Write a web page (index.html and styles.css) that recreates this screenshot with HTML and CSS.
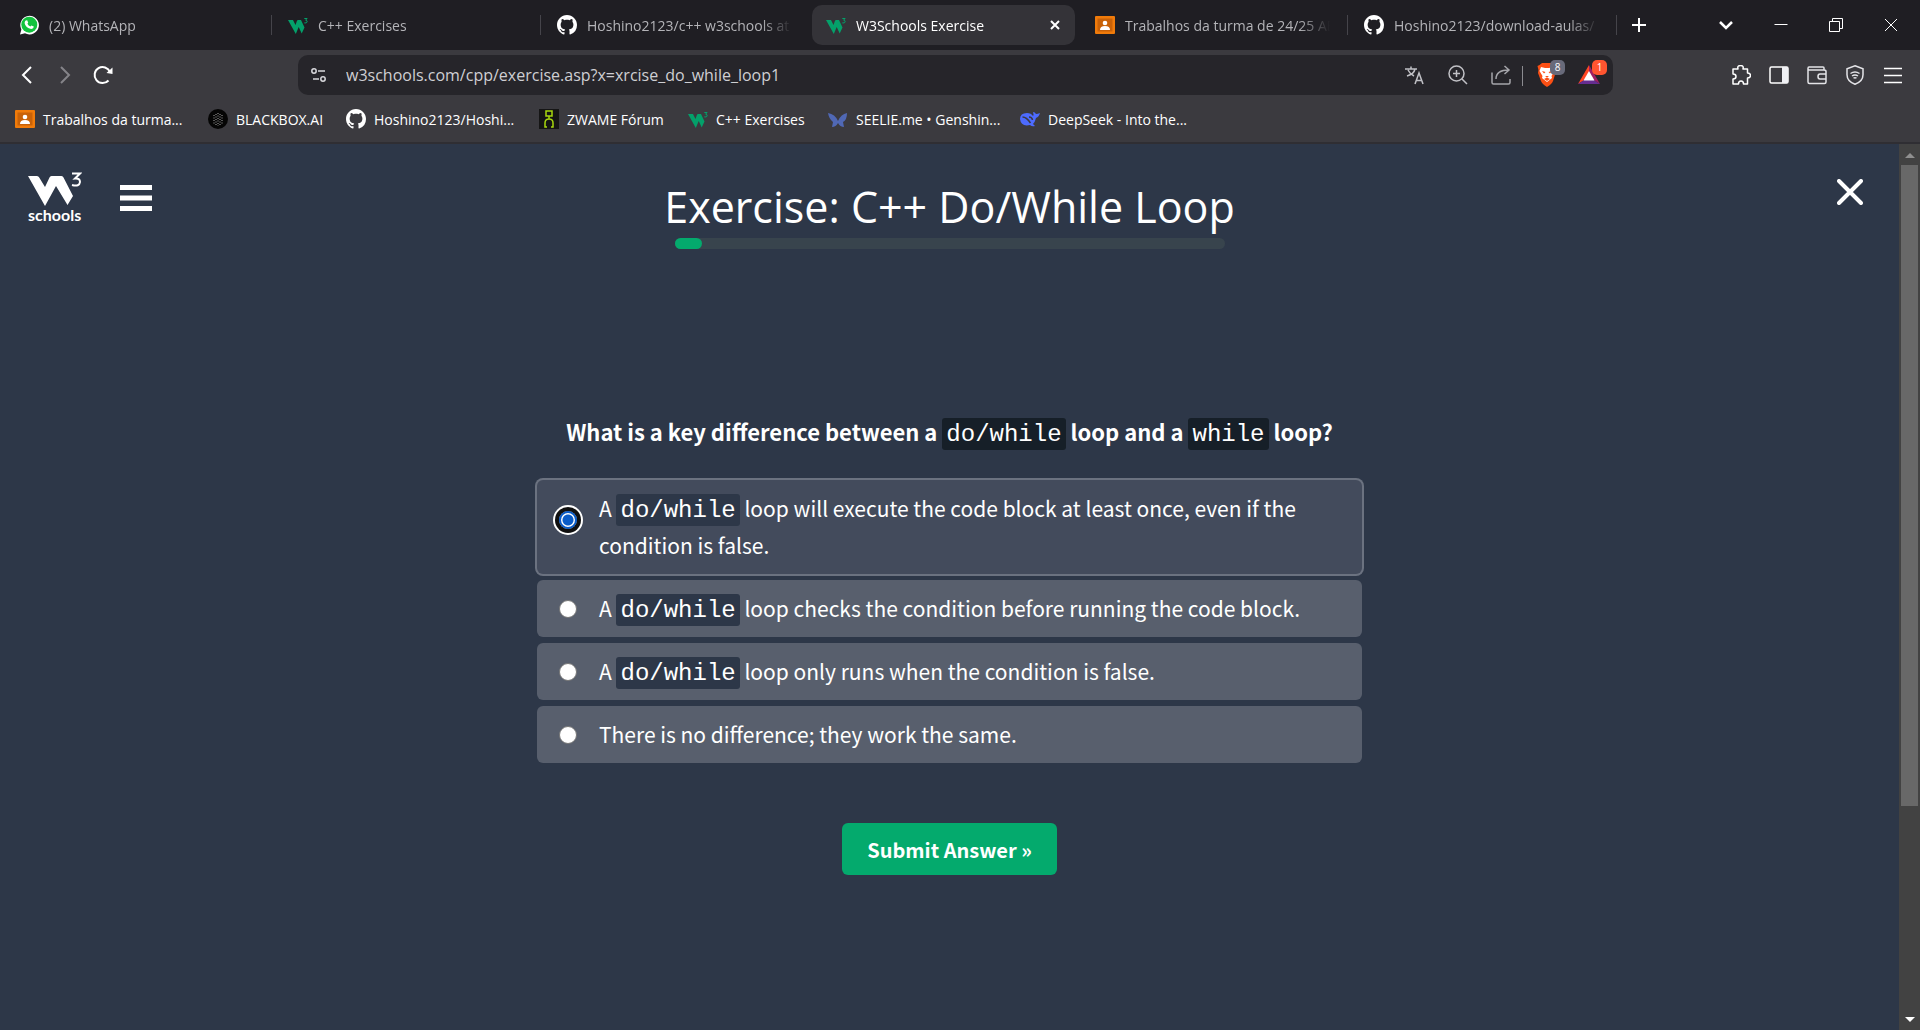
FILE: index.html
```html
<!DOCTYPE html>
<html lang="en">
<head>
<meta charset="utf-8">
<title>W3Schools Exercise</title>
<link rel="stylesheet" href="styles.css">
</head>
<body>
<svg class="defs" aria-hidden="true">
  <symbol id="w3" viewBox="0 0 20 20"><path d="M0 5h5l2.500 5L9 5.700Q9.400 5 10 5h3l3.500 7.500-2.800 6-3-6.500-2.900 7z" fill="#04a06a"/><path d="M16.300 3.500h2.800l-1.500 1.700q1.800.2 1.600 1.700-.4 1.500-2.900 1" fill="none" stroke="#04a06a"/></symbol>
  <symbol id="github" viewBox="0 0 16 16"><path fill="#fff" d="M8 0C3.580 0 0 3.580 0 8c0 3.540 2.290 6.530 5.470 7.590.4.070.55-.17.55-.38 0-.19-.01-.82-.01-1.490-2.010.37-2.530-.49-2.690-.94-.09-.23-.48-.94-.82-1.130-.28-.15-.68-.52-.01-.53.63-.01 1.080.58 1.230.82.72 1.210 1.870.87 2.330.66.070-.52.28-.87.51-1.070-1.780-.2-3.640-.89-3.640-3.950 0-.87.31-1.590.82-2.150-.08-.2-.36-1.020.08-2.120 0 0 .67-.21 2.200.82.640-.18 1.320-.27 2-.27s1.360.09 2 .27c1.530-1.040 2.200-.82 2.200-.82.44 1.100.16 1.920.08 2.120.51.560.82 1.270.82 2.150 0 3.070-1.870 3.750-3.650 3.950.29.250.54.730.54 1.480 0 1.070-.01 1.930-.01 2.200 0 .21.15.46.55.38A8 8 0 0 0 16 8c0-4.420-3.580-8-8-8z"/></symbol>
  <symbol id="classroom" viewBox="0 0 20 20"><rect y="1" width="20" height="18" rx="1" fill="#f07b0a"/><rect x="2.500" y="3.500" width="15" height="13" fill="#c96208"/><circle cx="10" cy="8" r="2.300" fill="#fff"/><path d="M5 15q0-4 5-4t5 4z" fill="#fff"/></symbol>
</svg>

<div class="browser">
  <header class="chrome">
    <div class="tabstrip">
      <nav class="tabs" aria-label="Tabs">
        <a class="tab" href="#"><svg class="fav" viewBox="0 0 20 20"><path d="M1 19.500l1.400-5A9.300 9.300 0 1 1 6 18.200z" fill="#fff"/><circle cx="10.300" cy="9.700" r="8" fill="#12c33e"/><path d="M6.700 5.500l1.500-.2 1 2.400-.8 1.100q1 2 3 2.800l1-1.200 2.400 1.200q0 2.300-2.500 2.400Q6.500 13 5.600 8q.1-1.700 1.100-2.500z" fill="#fff"/></svg><span class="tab-title">(2) WhatsApp</span></a>
        <a class="tab" href="#"><svg class="fav"><use href="#w3"/></svg><span class="tab-title">C++ Exercises</span></a>
        <a class="tab tab-before" href="#"><svg class="fav"><use href="#github"/></svg><span class="tab-title">Hoshino2123/c++ w3schools at</span></a>
        <div class="tab tab-active"><svg class="fav"><use href="#w3"/></svg><span class="tab-title">W3Schools Exercise</span><button class="icon-btn tab-close" aria-label="Close tab"><svg width="12" height="12" viewBox="0 0 12 12"><path d="M2 2l8 8M10 2l-8 8" stroke="#fff" stroke-width="2"/></svg></button></div>
        <a class="tab" href="#"><svg class="fav"><use href="#classroom"/></svg><span class="tab-title">Trabalhos da turma de 24/25 AE</span></a>
        <a class="tab" href="#"><svg class="fav"><use href="#github"/></svg><span class="tab-title">Hoshino2123/download-aulas/</span></a>
      </nav>
      <button class="icon-btn new-tab" aria-label="New tab"><svg width="16" height="16" viewBox="0 0 16 16"><path d="M8 1v14M1 8h14" stroke="#fff" stroke-width="2"/></svg></button>
      <div class="window-controls">
        <button class="icon-btn" aria-label="Search tabs"><svg width="16" height="16" viewBox="0 0 16 16"><path d="M2 5l6 6 6-6" fill="none" stroke="#fff" stroke-width="2.500"/></svg></button>
        <button class="icon-btn" aria-label="Minimize"><svg width="16" height="16" viewBox="0 0 16 16"><path d="M1.500 7.500h13" stroke="#fff"/></svg></button>
        <button class="icon-btn" aria-label="Restore"><svg width="16" height="16" viewBox="0 0 16 16"><path d="M1.500 4.500h10v10h-10zM4.500 4.500v-3h10v10h-3" fill="none" stroke="#fff"/></svg></button>
        <button class="icon-btn" aria-label="Close"><svg width="16" height="16" viewBox="0 0 16 16"><path d="M2 2l12 12M14 2L2 14" stroke="#fff"/></svg></button>
      </div>
    </div>

    <div class="toolbar">
      <div class="nav-buttons">
        <button class="icon-btn" aria-label="Back"><svg width="20" height="20" viewBox="0 0 20 20"><path d="M14 2l-8 8 8 8" fill="none" stroke="#fff" stroke-width="2"/></svg></button>
        <button class="icon-btn" aria-label="Forward"><svg width="20" height="20" viewBox="0 0 20 20"><path d="M6 2l8 8-8 8" fill="none" stroke="#858489" stroke-width="2"/></svg></button>
        <button class="icon-btn" aria-label="Reload"><svg width="20" height="20" viewBox="0 0 20 20"><path d="M17 7a8 8 0 1 0-1.500 8.500" fill="none" stroke="#fff" stroke-width="2"/><path d="M19.500 2.500V9l-6-1z" fill="#fff"/></svg></button>
      </div>
      <div class="address">
        <svg class="site-info" viewBox="0 0 16 16"><g fill="none" stroke="#d8d8dc" stroke-width="1.500"><circle cx="3" cy="4" r="2.200"/><path d="M7 4h7M2 12h6"/><circle cx="12" cy="12" r="2.200"/></g></svg>
        <input class="url" type="text" aria-label="Address" value="w3schools.com/cpp/exercise.asp?x=xrcise_do_while_loop1">
        <button class="icon-btn addr-btn" aria-label="Translate"><svg width="20" height="20" viewBox="0 0 20 20"><g fill="none" stroke="#c0c0c5" stroke-width="1.500"><path d="M0 4h12M6 1.500V4M2 11q7-2 8-7M3 5q2 4 6 6M10 19l4-11 4 11M11.500 15.500h5"/></g></svg></button>
        <button class="icon-btn addr-btn" aria-label="Zoom"><svg width="20" height="20" viewBox="0 0 20 20"><g fill="none" stroke="#c0c0c5" stroke-width="1.500"><circle cx="8.500" cy="8.500" r="7.500"/><path d="M14 14l5 5M8.500 5v7M5 8.500h7"/></g></svg></button>
        <button class="icon-btn addr-btn" aria-label="Share"><svg width="20" height="20" viewBox="0 0 20 20"><path d="M1 7.500v10q0 1.500 1.500 1.500h15q1.500 0 1.500-1.500V14M5 14q0-9 13-9M13.500 1L18 5l-4.500 4" fill="none" stroke="#a5a5aa" stroke-width="1.500"/></svg></button>
        <span class="addr-divider"></span>
        <button class="icon-btn shield-btn" aria-label="Brave Shields"><svg width="20" height="24" viewBox="0 0 20 24"><path d="M5 0h10l2 2 2 1-1 4 .5 3L16 18q-1 3-6 6-5-3-6-6L1 10l.5-3-1-4 2-1z" fill="#fb4f14"/><path d="M4 4l4 1h4l4-1 1.500 4-3 5 .5 2-5 4-5-4 .5-2-3-5z" fill="#fff"/><path d="M5 8l3.500 1L7 10.500zM15 8l-3.500 1 1.500 1.500zM8 13h4l-2 1.500zM7 16l3-1.500 3 1.500-3 2z" fill="#fb4f14"/></svg><span class="badge badge-gray">8</span></button>
        <button class="icon-btn shield-btn" aria-label="Rewards"><svg width="22" height="24" viewBox="0 0 22 24"><path d="M11 2L0 21l11-7z" fill="#ff4724"/><path d="M11 2l11 19-11-7z" fill="#9e1f63"/><path d="M0 21h22l-11-7z" fill="#662d91"/><path d="M11 8l-5.500 9.500h11z" fill="#fff"/></svg><span class="badge badge-red">1</span></button>
      </div>
      <div class="toolbar-actions">
        <button class="icon-btn" aria-label="Extensions"><svg width="20" height="20" viewBox="0 0 20 20"><path d="M2 4h5q-1-3.500 2.500-3.500T12 4h4.500v4q3 0 3 2.500t-3 2.500v6h-4q0-3-2.500-3t-2.500 3H2v-5q3 0 3-2.500T2 9z" fill="none" stroke="#fff" stroke-width="1.500" stroke-linejoin="round"/></svg></button>
        <button class="icon-btn" aria-label="Side panel"><svg width="20" height="20" viewBox="0 0 20 20"><rect x="1" y="2" width="18" height="16" rx="1.500" fill="none" stroke="#fff" stroke-width="1.500"/><path d="M13 2h6v16h-6z" fill="#f0f1f5"/></svg></button>
        <button class="icon-btn" aria-label="Wallet"><svg width="20" height="20" viewBox="0 0 20 20"><path d="M17 5V3q0-1-1-1H2q-1 0-1 1.500T2 5h15q2 0 2 1.500V17q0 1.500-1.500 1.500h-15Q1 18.500 1 17V3M19 9h-6q-2 0-2 2.500t2 2.500h6" fill="none" stroke="#e4e4e8" stroke-width="1.500"/></svg></button>
        <button class="icon-btn" aria-label="VPN"><svg width="20" height="20" viewBox="0 0 20 20"><path d="M10 .8l8 3v6q0 6.500-8 9.500-8-3-8-9.500v-6zM5.500 8.500q4.500-3 9 0M7 11q3-2 6 0M8.500 13.200q1.500-1 3 0" fill="none" stroke="#e4e4e8" stroke-width="1.500"/></svg></button>
        <button class="icon-btn" aria-label="Menu"><svg width="20" height="20" viewBox="0 0 20 20"><path d="M1 3.500h18M1 10.500h18M1 17.500h18" stroke="#fff" stroke-width="1.500"/></svg></button>
      </div>
    </div>

    <nav class="bookmarks" aria-label="Bookmarks">
      <a class="bookmark" href="#"><svg class="fav"><use href="#classroom"/></svg>Trabalhos da turma...</a>
      <a class="bookmark" href="#"><svg class="fav" viewBox="0 0 20 20"><circle cx="10" cy="10" r="10" fill="#050505"/><path d="M10 4v13M6 6v9M14 6v9M8 5v11M12 5v11" stroke="#aaa" stroke-dasharray="1 1.500"/></svg>BLACKBOX.AI</a>
      <a class="bookmark" href="#"><svg class="fav"><use href="#github"/></svg>Hoshino2123/Hoshi...</a>
      <a class="bookmark" href="#"><svg class="fav" viewBox="0 0 20 20"><path d="M0 0h20v20H0z" fill="#151515"/><path d="M7 2h6v5H7zM8 18H6v-4q0-4 4-4t4 4v4h-2M10 7v3" fill="none" stroke="#a8d80e" stroke-width="1.500"/></svg>ZWAME Fórum</a>
      <a class="bookmark" href="#"><svg class="fav"><use href="#w3"/></svg>C++ Exercises</a>
      <a class="bookmark" href="#"><svg class="fav" viewBox="0 0 20 20"><path d="M0 4q7 1 10 8 3-7 9-8 0 7-4 9l1 5q-4 0-6-4-2 4-6 4l1-5Q1 10 0 4z" fill="#5068b5"/></svg>SEELIE.me • Genshin...</a>
      <a class="bookmark" href="#"><svg class="fav" viewBox="0 0 20 20"><path d="M0 10q0-6 7-6 4 0 6 3 1-1 0-4 2 0 3 2 2 0 4-1-1 4-4 5-1 4-3 6l2 2q-3 1-5-1-9 2-10-6z" fill="#4d6bfe"/><path d="M2.500 8q4 0 8 6M9 8q3 0 3.500 3" fill="none" stroke="#3b3a3f" stroke-width="1.500"/></svg>DeepSeek - Into the...</a>
    </nav>
  </header>

  <div class="viewport">
    <main class="page">
      <header class="page-header">
        <div class="brand">
          <a class="logo" href="#" aria-label="W3Schools">
            <svg width="54" height="35" viewBox="0 0 54 35"><path d="M0 4h9q1.500 0 2.200 1.500L17 15l4.500-9.500Q22 4 23.500 4h10q1.500 0 2 1.500L45 24l-5.500 9L28 14 17 34z" fill="#fff"/><path d="M44 1.500h8l-5 5q5-.5 5 3.500-.5 5-8 3" fill="none" stroke="#fff" stroke-width="2"/></svg>
            <span class="logo-text">schools</span>
          </a>
          <button class="icon-btn" aria-label="Open menu"><svg width="32" height="26" viewBox="0 0 32 26"><path d="M0 2.500h32M0 13h32M0 23.500h32" stroke="#fff" stroke-width="5"/></svg></button>
        </div>
        <div class="heading">
          <h1 class="title">Exercise: C++ Do/While Loop</h1>
          <div class="progress"><div class="progress-fill" style="width:5%"></div></div>
        </div>
        <button class="icon-btn close-exercise" aria-label="Close exercise"><svg width="26" height="26" viewBox="0 0 26 26"><path d="M2 2l22 22M24 2L2 24" stroke="#fff" stroke-width="4" stroke-linecap="round"/></svg></button>
      </header>

      <form class="quiz">
        <h2 class="question">What is a key difference between a <code class="code code-dark">do/while</code> loop and a <code class="code code-dark">while</code> loop?</h2>
        <div class="options">
          <label class="option option-selected"><input class="radio" type="radio" name="answer" checked><span>A <code class="code">do/while</code> loop will execute the code block at least once, even if the condition is false.</span></label>
          <label class="option"><input class="radio" type="radio" name="answer"><span>A <code class="code">do/while</code> loop checks the condition before running the code block.</span></label>
          <label class="option"><input class="radio" type="radio" name="answer"><span>A <code class="code">do/while</code> loop only runs when the condition is false.</span></label>
          <label class="option"><input class="radio" type="radio" name="answer"><span>There is no difference; they work the same.</span></label>
        </div>
        <button class="submit" type="button">Submit Answer »</button>
      </form>
    </main>
    <div class="scrollbar" aria-hidden="true">
      <svg width="10" height="21" viewBox="0 0 10 21"><path d="M0 14l5-5 5 5z" fill="#8f8f8f"/></svg>
      <div class="track"><div class="thumb"></div></div>
      <svg width="10" height="21" viewBox="0 0 10 21"><path d="M0 8l5 5 5-5z" fill="#fff"/></svg>
    </div>
  </div>
</div>
</body>
</html>
```
FILE: styles.css
```css
* {
  box-sizing: border-box;
}

body {
  margin: 0;
  color: #fff;
  background: #2d3748;
  font-family: "Open Sans", "Noto Sans", sans-serif;
}

a {
  color: inherit;
  text-decoration: none;
}

.defs {
  display: none;
}

.browser {
  display: flex;
  flex-direction: column;
  min-height: 100vh;
}

.icon-btn {
  display: flex;
  align-items: center;
  justify-content: center;
  padding: 0;
  border: 0;
  background: none;
  color: inherit;
}

/* Browser chrome */
.chrome {
  background: #3b3a3f;
  border-bottom: 2px solid #2f2e33;
  font-size: 14px;
  font-weight: 400;
}

.tabstrip {
  display: flex;
  align-items: center;
  height: 50px;
  padding: 0 21px 0 5px;
  background: #1f1e23;
}

.tabs {
  display: flex;
  flex: 0 1 1608px;
  gap: 6px;
  min-width: 0;
}

.tab {
  position: relative;
  display: flex;
  flex: 1 1 0;
  align-items: center;
  gap: 10px;
  min-width: 0;
  height: 40px;
  padding: 0 14px;
  color: #b4b4b8;
}

.tab::after {
  content: "";
  position: absolute;
  top: 10px;
  right: -4px;
  width: 1px;
  height: 20px;
  background: #45444a;
}

.tab-before::after,
.tab-active::after {
  display: none;
}

.tab-active {
  border-radius: 10px;
  background: #343338;
  color: #fff;
}

.tab-title {
  flex: 1;
  overflow: hidden;
  white-space: nowrap;
  mask-image: linear-gradient(to right, #000 85%, transparent);
}

.fav {
  flex: none;
  width: 20px;
  height: 20px;
}

.new-tab {
  margin-left: 18px;
}

.window-controls {
  display: flex;
  justify-content: space-between;
  width: 181px;
  margin-left: auto;
}

.toolbar {
  display: flex;
  align-items: center;
  padding: 5px 17px;
}

.nav-buttons {
  display: flex;
  gap: 18px;
  width: 281px;
}

.address {
  display: flex;
  flex: 1;
  align-items: center;
  gap: 23px;
  height: 40px;
  padding: 0 13px;
  border-radius: 10px;
  background: #26252a;
}

.site-info {
  width: 16px;
  height: 18px;
  margin-right: -4px;
}

.url {
  flex: 1;
  min-width: 0;
  padding: 0;
  border: 0;
  outline: 0;
  background: none;
  color: #cfcfd3;
  font: 400 16px "Open Sans", "Noto Sans", sans-serif;
}

.addr-divider {
  width: 1px;
  height: 20px;
  margin: 0 -10px -1px -12px;
  background: #8b8b90;
}

.shield-btn {
  position: relative;
  width: 22px;
  margin-right: -3px;
}

.shield-btn:last-child {
  margin-right: 0;
}

.badge {
  position: absolute;
  top: -3px;
  left: 14px;
  width: 15px;
  height: 15px;
  border-radius: 5px;
  font: 10px/15px "Open Sans", sans-serif;
}

.badge-gray {
  background: #686a7a;
}

.badge-red {
  background: #ff5530;
}

.toolbar-actions {
  display: flex;
  justify-content: flex-end;
  gap: 18px;
  width: 290px;
}

.bookmarks {
  display: grid;
  grid-template-columns: 193px 138px 193px 149px 140px 192px 180px;
  align-items: center;
  height: 42px;
  padding: 0 15px 4px;
}

.bookmark {
  display: flex;
  align-items: center;
  gap: 8px;
  white-space: nowrap;
}

/* Exercise page */
.viewport {
  display: flex;
  flex: 1;
}

.page {
  flex: 1;
}

.page-header {
  display: grid;
  grid-template-columns: 1fr auto 1fr;
  padding: 28px 28px 0;
}

.brand {
  display: flex;
  align-items: center;
  align-self: start;
  gap: 38px;
}

.logo {
  display: flex;
  flex-direction: column;
}

.logo-text {
  font: bold 16px/16px Lato, sans-serif;
}

.heading {
  display: flex;
  flex-direction: column;
  align-items: center;
}

.title {
  margin: 0;
  padding: 6px 0 2px;
  font-size: 43px;
  font-weight: 400;
  line-height: 58px;
}

.progress {
  width: 550px;
  height: 11px;
  border-radius: 6px;
  background: #38444d;
}

.progress-fill {
  height: 100%;
  border-radius: 6px;
  background: #04aa6d;
}

.close-exercise {
  align-self: start;
  justify-self: end;
  margin: 7px 8px 0 0;
}

.quiz {
  display: flex;
  flex-direction: column;
  align-items: center;
  padding: 164px 24px 24px;
  font-family: "Noto Sans CJK SC", sans-serif;
}

.question {
  margin: 0;
  font-size: 22px;
  font-weight: 600;
  line-height: 36px;
}

.code {
  padding: 3px 4px 2px;
  border-radius: 3px;
  background: #2d3748;
  font: 24px/30px "Liberation Mono", monospace;
}

.code-dark {
  background: #161f28;
}

.options {
  display: flex;
  flex-direction: column;
  gap: 6px;
  width: 100%;
  max-width: 825px;
  margin-top: 30px;
}

.option {
  display: flex;
  align-items: flex-start;
  gap: 22px;
  padding: 10px 22px;
  border-radius: 6px;
  background: #585f6d;
  font-size: 21px;
  line-height: 37px;
}

.option-selected {
  background: #434b5c;
  box-shadow: 0 0 0 2px #6b7280;
}

.radio {
  flex: none;
  width: 18px;
  height: 18px;
  margin: 10px 0 0;
  appearance: none;
  border: 1px solid #767676;
  border-radius: 50%;
  background: #fff;
}

.radio:checked {
  margin-top: 21px;
  border: 2px solid #0a5cc8;
  background: radial-gradient(#0a5cc8 5px, #fff 6px);
  box-shadow: 0 0 0 4px #101010, 0 0 0 6px #fff;
}

.submit {
  height: 52px;
  margin-top: 60px;
  padding: 0 25px;
  border: 0;
  border-radius: 6px;
  background: #04aa6d;
  color: #fff;
  font: 600 20px "Noto Sans CJK SC", sans-serif;
}

/* Page scrollbar */
.scrollbar {
  display: flex;
  flex-direction: column;
  align-items: center;
  width: 21px;
  background: #424242;
}

.track {
  flex: 1;
}

.thumb {
  width: 17px;
  height: 76%;
  background: #686868;
}
```
